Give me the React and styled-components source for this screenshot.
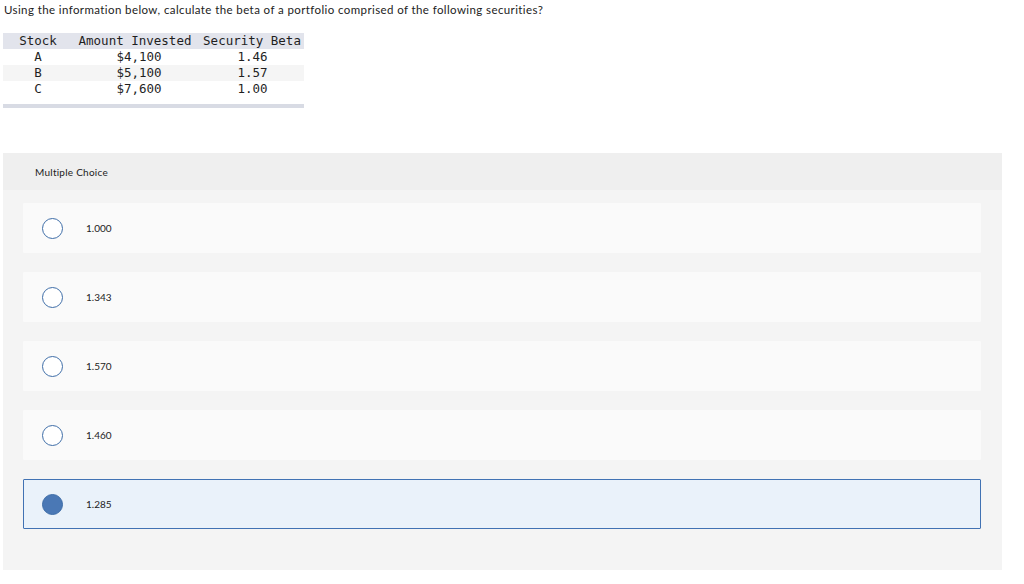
import { useState } from 'react';
import styled, { createGlobalStyle } from 'styled-components';

const GlobalStyle = createGlobalStyle`
  html, body {
    margin: 0;
    padding: 0;
    background: #ffffff;
  }
  body {
    font-family: Lato, "Open Sans", sans-serif;
    color: #1a1a1a;
  }
`;

const Page = styled.div`
  padding: 3px 22px 0 3px;
  width: 1000px;
`;

const Question = styled.p`
  margin: 0 0 0 1px;
  font-size: 11.5px;
  letter-spacing: 0.4px;
  line-height: 14px;
  color: #222;
`;

const Table = styled.div`
  margin-top: 16px;
  width: 301px;
  display: grid;
  grid-template-columns: 70px 124px 107px;
  font-family: "DejaVu Sans Mono", "Liberation Mono", monospace;
  font-size: 12.5px;
  color: #1f1f1f;
  border-bottom: 4px solid #d8dbe4;
`;

const Cell = styled.div`
  height: 16px;
  line-height: 16px;
  text-align: center;
  white-space: nowrap;
  background: ${(p) => (p.$head ? '#e2e4ec' : p.$shade ? '#f5f5f5' : 'transparent')};
  padding-left: ${(p) => p.$pad || 0}px;
`;

const Spacer = styled.div`
  grid-column: 1 / span 3;
  height: 7px;
`;

const Panel = styled.div`
  margin-top: 45px;
  width: 999px;
  background: #f4f4f4;
  padding-bottom: 41px;
`;

const PanelHead = styled.div`
  height: 37px;
  background: #efefef;
  display: flex;
  align-items: center;
  padding-left: 32px;
  font-size: 10px;
  letter-spacing: 0.25px;
  color: #222;
`;

const Choices = styled.div`
  display: flex;
  flex-direction: column;
  gap: 19px;
  padding: 13px 21px 0 20px;
`;

const Choice = styled.label`
  height: 50px;
  box-sizing: border-box;
  display: flex;
  align-items: center;
  padding-left: 18px;
  background: ${(p) => (p.$on ? '#eaf2fa' : '#fafafa')};
  border: 1px solid ${(p) => (p.$on ? '#4172b3' : 'transparent')};
  border-radius: 1px;
  cursor: pointer;
  font-size: 10px;
  color: #222;
`;

const Radio = styled.span`
  width: 21px;
  height: 21px;
  box-sizing: border-box;
  border-radius: 50%;
  border: 1px solid #3f6ea8;
  background: ${(p) => (p.$on ? '#4a78b5' : '#ffffff')};
  margin-right: 23px;
  flex-shrink: 0;
`;

const rows = [
  ['A', '$4,100', '1.46'],
  ['B', '$5,100', '1.57'],
  ['C', '$7,600', '1.00'],
];

const options = ['1.000', '1.343', '1.570', '1.460', '1.285'];

function App() {
  const [selected, setSelected] = useState(4);

  return (
    <Page>
      <GlobalStyle />
      <Question>
        Using the information below, calculate the beta of a portfolio comprised of the following securities?
      </Question>
      <Table>
        <Cell $head>Stock</Cell>
        <Cell $head>Amount Invested</Cell>
        <Cell $head $pad={3}>Security Beta</Cell>
        {rows.map((r, i) => [
          <Cell key={`s${i}`} $shade={i === 1}>{r[0]}</Cell>,
          <Cell key={`a${i}`} $shade={i === 1} $pad={8}>{r[1]}</Cell>,
          <Cell key={`b${i}`} $shade={i === 1} $pad={4}>{r[2]}</Cell>,
        ])}
        <Spacer />
      </Table>
      <Panel>
        <PanelHead>Multiple Choice</PanelHead>
        <Choices>
          {options.map((o, i) => (
            <Choice key={o} $on={selected === i} onClick={() => setSelected(i)}>
              <Radio $on={selected === i} />
              {o}
            </Choice>
          ))}
        </Choices>
      </Panel>
    </Page>
  );
}

export default App;
